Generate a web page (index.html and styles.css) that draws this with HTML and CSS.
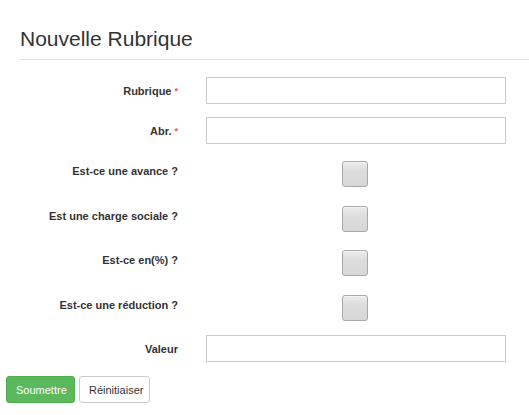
FILE: index.html
```html
<!DOCTYPE html>
<html lang="fr">
<head>
<meta charset="utf-8">
<title>Nouvelle Rubrique</title>
<link rel="stylesheet" href="styles.css">
</head>
<body>
<div class="page-header">
  <h3 class="title">Nouvelle Rubrique</h3>
</div>
<form class="form">
  <div class="row">
    <label class="label">Rubrique<span class="req">*</span></label>
    <div class="field"><input class="input" type="text"></div>
  </div>
  <div class="row">
    <label class="label">Abr.<span class="req">*</span></label>
    <div class="field"><input class="input" type="text"></div>
  </div>
  <div class="row row-check">
    <label class="label">Est-ce une avance ?</label>
    <div class="field field-check"><span class="check"></span></div>
  </div>
  <div class="row row-check">
    <label class="label">Est une charge sociale ?</label>
    <div class="field field-check"><span class="check"></span></div>
  </div>
  <div class="row row-check">
    <label class="label">Est-ce en(%) ?</label>
    <div class="field field-check"><span class="check"></span></div>
  </div>
  <div class="row row-check">
    <label class="label">Est-ce une réduction ?</label>
    <div class="field field-check"><span class="check"></span></div>
  </div>
  <div class="row">
    <label class="label">Valeur</label>
    <div class="field"><input class="input" type="text"></div>
  </div>
  <div class="actions">
    <button type="button" class="btn btn-success">Soumettre</button>
    <button type="button" class="btn btn-default">Réinitiaiser</button>
  </div>
</form>
</body>
</html>
```
FILE: styles.css
```css
html, body {
  margin: 0;
  padding: 0;
  background: #fff;
}
body {
  font-family: "Liberation Sans", Arial, sans-serif;
  color: #333;
}
.page-header {
  margin: 27px 0 0 20px;
  padding-bottom: 9px;
  border-bottom: 1px solid #e5e5e5;
}
.title {
  margin: 0;
  font-size: 21px;
  line-height: 23px;
  font-weight: normal;
  color: #333;
}
.form {
  margin-top: 17px;
  display: flex;
  flex-direction: column;
  gap: 13px;
}
.row {
  display: grid;
  grid-template-columns: 178px 300px;
  column-gap: 28px;
  height: 27px;
}
.row-check {
  height: 31.5px;
}
.label {
  text-align: right;
  font-size: 11px;
  font-weight: bold;
  line-height: 17px;
  padding-top: 6px;
  color: #333;
}
.req {
  color: #e8545a;
  font-size: 9px;
  margin-left: 3px;
  vertical-align: 1px;
}
.field {
  display: flex;
}
.field-check {
  justify-content: center;
  padding-top: 4px;
  padding-right: 3px;
}
.input {
  box-sizing: border-box;
  width: 300px;
  height: 27px;
  margin: 0;
  border: 1px solid #ccc;
  border-radius: 0;
  background: #fff;
  font: inherit;
}
.check {
  box-sizing: border-box;
  width: 26px;
  height: 26px;
  border: 1px solid #a8a8a8;
  border-radius: 3px;
  background: linear-gradient(#ececec, #dcdcdc 40%, #d8d8d8);
  box-shadow: inset 0 1px 0 #f4f4f4;
}
.actions {
  display: flex;
  gap: 4px;
  padding-left: 6px;
  margin-top: 1px;
}
.btn {
  box-sizing: border-box;
  height: 27px;
  padding: 0 9px;
  font-family: "Liberation Sans", Arial, sans-serif;
  font-size: 11px;
  border-radius: 3px;
  border: 1px solid #ccc;
  cursor: pointer;
}
.btn-success {
  width: 69px;
  background: #5cb85c;
  border-color: #4cae4c;
  color: #fff;
}
.btn-default {
  width: 71px;
  background: #fff;
  color: #333;
}
```
